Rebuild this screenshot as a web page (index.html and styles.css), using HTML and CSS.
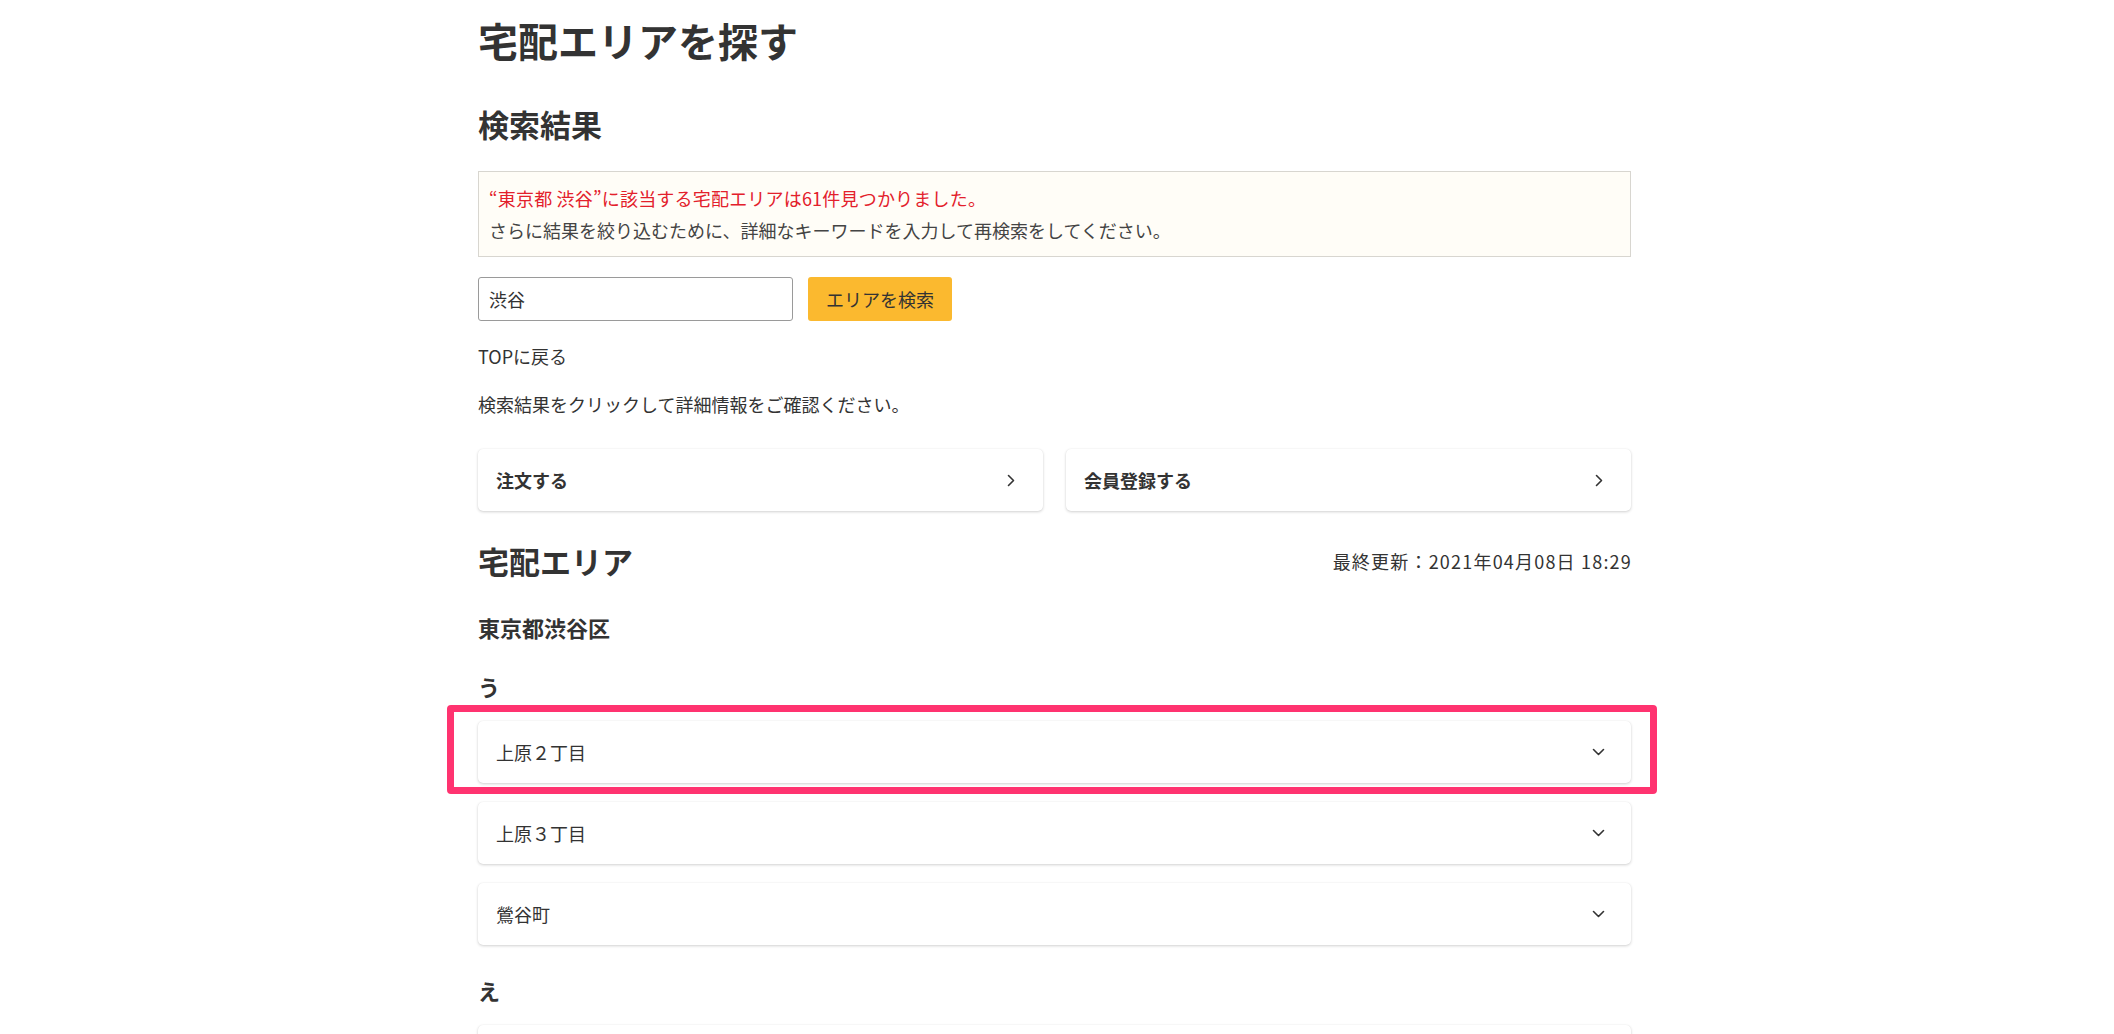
FILE: index.html
```html
<!DOCTYPE html>
<html lang="ja">
<head>
<meta charset="utf-8">
<title>宅配エリアを探す</title>
<link rel="stylesheet" href="styles.css">
</head>
<body>
<main class="page">
  <h1 class="title">宅配エリアを探す</h1>
  <h2 class="section-title">検索結果</h2>
  <div class="notice">
    <p class="notice-alert">“東京都 渋谷”に該当する宅配エリアは61件見つかりました。</p>
    <p class="notice-text">さらに結果を絞り込むために、詳細なキーワードを入力して再検索をしてください。</p>
  </div>
  <form class="search">
    <input class="search-input" type="text" value="渋谷">
    <button class="search-btn" type="button">エリアを検索</button>
  </form>
  <p class="top-link">TOPに戻る</p>
  <p class="hint">検索結果をクリックして詳細情報をご確認ください。</p>
  <div class="actions">
    <a class="action-card">注文する
      <svg class="chev-right" width="8" height="13" viewBox="0 0 8 13"><path d="M1.5 1.5 L6.5 6.5 L1.5 11.5" fill="none" stroke="#333" stroke-width="1.6" stroke-linecap="round" stroke-linejoin="round"/></svg>
    </a>
    <a class="action-card">会員登録する
      <svg class="chev-right" width="8" height="13" viewBox="0 0 8 13"><path d="M1.5 1.5 L6.5 6.5 L1.5 11.5" fill="none" stroke="#333" stroke-width="1.6" stroke-linecap="round" stroke-linejoin="round"/></svg>
    </a>
  </div>
  <div class="area-head">
    <h2 class="section-title">宅配エリア</h2>
    <span class="updated">最終更新：2021年04月08日 18:29</span>
  </div>
  <h3 class="ward">東京都渋谷区</h3>
  <h4 class="kana">う</h4>
  <ul class="area-list">
    <li class="area-item highlighted">上原２丁目
      <svg class="chev-down" width="13" height="8" viewBox="0 0 13 8"><path d="M1.5 1.5 L6.5 6.5 L11.5 1.5" fill="none" stroke="#333" stroke-width="1.6" stroke-linecap="round" stroke-linejoin="round"/></svg>
    </li>
    <li class="area-item">上原３丁目
      <svg class="chev-down" width="13" height="8" viewBox="0 0 13 8"><path d="M1.5 1.5 L6.5 6.5 L11.5 1.5" fill="none" stroke="#333" stroke-width="1.6" stroke-linecap="round" stroke-linejoin="round"/></svg>
    </li>
    <li class="area-item">鶯谷町
      <svg class="chev-down" width="13" height="8" viewBox="0 0 13 8"><path d="M1.5 1.5 L6.5 6.5 L11.5 1.5" fill="none" stroke="#333" stroke-width="1.6" stroke-linecap="round" stroke-linejoin="round"/></svg>
    </li>
  </ul>
  <h4 class="kana">え</h4>
  <ul class="area-list">
    <li class="area-item"></li>
  </ul>
</main>
</body>
</html>
```

FILE: styles.css
```css
html, body {
  margin: 0;
  padding: 0;
  background: #ffffff;
}

body {
  font-family: "Noto Sans CJK JP", "Noto Sans", sans-serif;
  color: #333333;
  font-size: 18px;
  line-height: 28px;
  height: 1034px;
  overflow: hidden;
}

.page {
  width: 1153px;
  margin-left: 478px;
  padding-top: 16px;
}

.title {
  margin: 0;
  font-size: 40px;
  line-height: 48px;
  font-weight: 700;
  color: #333333;
}

.section-title {
  margin: 0;
  font-size: 31px;
  line-height: 40px;
  font-weight: 700;
  color: #333333;
}

.title + .section-title {
  margin-top: 40px;
}

.notice {
  margin-top: 27px;
  border: 1px solid #d8d6d0;
  background: #fffdf7;
  padding: 10px 10px;
}

.notice p {
  margin: 0;
  line-height: 32px;
}

.notice-alert {
  color: #e3202b;
  letter-spacing: 0.2px;
}

.notice-text {
  color: #444444;
}

.search {
  margin: 20px 0 0;
  display: flex;
  gap: 15px;
}

.search-input {
  box-sizing: border-box;
  width: 315px;
  height: 44px;
  border: 1px solid #9a9a9a;
  border-radius: 3px;
  padding: 0 10px;
  font: inherit;
  color: #333333;
  background: #ffffff;
}

.search-btn {
  box-sizing: border-box;
  width: 144px;
  height: 44px;
  border: none;
  border-radius: 3px;
  background: #fbb92f;
  font: inherit;
  color: #333333;
  padding: 0;
}

.top-link {
  margin: 21px 0 0;
}

.hint {
  margin: 20px 0 0;
}

.actions {
  margin-top: 31px;
  display: grid;
  grid-template-columns: 1fr 1fr;
  gap: 23px;
}

.action-card {
  height: 62px;
  box-sizing: border-box;
  display: flex;
  align-items: center;
  justify-content: space-between;
  padding: 0 28px 0 18px;
  background: #ffffff;
  border-radius: 5px;
  box-shadow: 0 1px 3px rgba(0, 0, 0, 0.18), 0 0 1px rgba(0, 0, 0, 0.08);
  font-weight: 700;
  color: #333333;
}

.area-head {
  margin-top: 30px;
  display: flex;
  justify-content: space-between;
  align-items: center;
}

.updated {
  line-height: 40px;
  color: #333333;
  letter-spacing: 1.2px;
  margin-right: -1px;
}

.ward {
  margin: 30px 0 0;
  font-size: 22px;
  line-height: 32px;
  font-weight: 700;
}

.kana {
  margin: 27px 0 0;
  font-size: 22px;
  line-height: 32px;
  font-weight: 700;
}

.area-list {
  list-style: none;
  margin: 19px 0 0;
  padding: 0;
  display: flex;
  flex-direction: column;
  gap: 19px;
}

.area-list + .kana {
  margin-top: 29px;
}

.area-item {
  position: relative;
  height: 62px;
  box-sizing: border-box;
  display: flex;
  align-items: center;
  justify-content: space-between;
  padding: 0 26px 0 18px;
  background: #ffffff;
  border-radius: 5px;
  box-shadow: 0 1px 3px rgba(0, 0, 0, 0.18), 0 0 1px rgba(0, 0, 0, 0.08);
  color: #333333;
}

.highlighted::after {
  content: "";
  position: absolute;
  left: -31px;
  right: -26px;
  top: -16px;
  bottom: -11px;
  border: 7px solid #ff3370;
  border-radius: 4px;
  pointer-events: none;
}
```
